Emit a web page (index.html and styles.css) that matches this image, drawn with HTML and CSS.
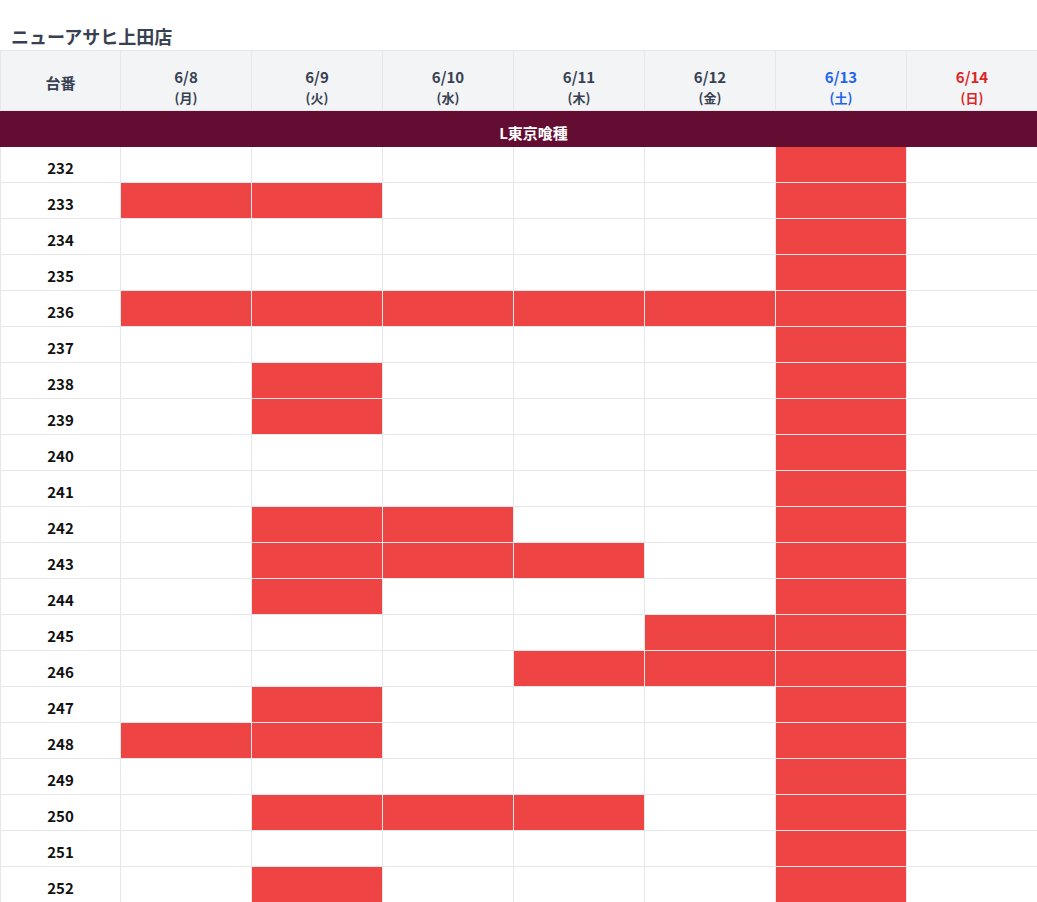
FILE: index.html
```html
<!DOCTYPE html>
<html lang="ja">
<head>
<meta charset="utf-8">
<title>ニューアサヒ上田店</title>
<link rel="stylesheet" href="styles.css">
</head>
<body>
<h1 class="title">ニューアサヒ上田店</h1>
<table class="grid">
  <colgroup>
    <col class="c-no">
    <col class="c-day"><col class="c-day"><col class="c-day"><col class="c-day"><col class="c-day"><col class="c-day"><col class="c-day">
  </colgroup>
  <thead>
    <tr class="head">
      <th class="h-no">台番</th>
      <th class="h-day"><span class="d">6/8</span><span class="w">(月)</span></th>
      <th class="h-day"><span class="d">6/9</span><span class="w">(火)</span></th>
      <th class="h-day"><span class="d">6/10</span><span class="w">(水)</span></th>
      <th class="h-day"><span class="d">6/11</span><span class="w">(木)</span></th>
      <th class="h-day"><span class="d">6/12</span><span class="w">(金)</span></th>
      <th class="h-day sat"><span class="d">6/13</span><span class="w">(土)</span></th>
      <th class="h-day sun"><span class="d">6/14</span><span class="w">(日)</span></th>
    </tr>
  </thead>
  <tbody id="body">
    <tr class="band"><td colspan="8"><span class="band-text">L東京喰種</span></td></tr>
  </tbody>
</table>
<script>
  var data = [
    [232,[5]],[233,[0,1,5]],[234,[5]],[235,[5]],[236,[0,1,2,3,4,5]],
    [237,[5]],[238,[1,5]],[239,[1,5]],[240,[5]],[241,[5]],
    [242,[1,2,5]],[243,[1,2,3,5]],[244,[1,5]],[245,[4,5]],[246,[3,4,5]],
    [247,[1,5]],[248,[0,1,5]],[249,[5]],[250,[1,2,3,5]],[251,[5]],[252,[1,5]]
  ];
  var body = document.getElementById('body');
  data.forEach(function (r) {
    var tr = document.createElement('tr');
    tr.className = 'row';
    var th = document.createElement('td');
    th.className = 'no';
    th.textContent = r[0];
    tr.appendChild(th);
    for (var i = 0; i < 7; i++) {
      var td = document.createElement('td');
      td.className = 'cell' + (r[1].indexOf(i) >= 0 ? ' on' : '');
      tr.appendChild(td);
    }
    body.appendChild(tr);
  });
</script>
</body>
</html>
```
FILE: styles.css
```css
html, body {
  margin: 0;
  padding: 0;
  background: #ffffff;
}
body {
  font-family: "Noto Sans CJK JP", "Noto Sans", sans-serif;
  padding-top: 22px;
}
.title {
  margin: 0;
  padding-left: 11px;
  font-size: 18px;
  line-height: 28px;
  font-weight: 700;
  color: #374151;
}
.grid {
  width: 1037px;
  table-layout: fixed;
  border-collapse: collapse;
}
.c-no { width: 120px; }
.c-day { width: 131px; }
.grid th, .grid td {
  border: 1px solid #e5e7eb;
  padding: 0;
  text-align: center;
}
.head { height: 60px; }
.head th {
  background: #f3f4f6;
  color: #374151;
  font-weight: 700;
  vertical-align: top;
}
.h-no {
  font-size: 15px;
  line-height: 22px;
  padding-top: 21px !important;
}
.h-day { padding-top: 15px !important; }
.h-day .d {
  display: block;
  font-size: 15px;
  line-height: 21px;
}
.h-day .w {
  display: block;
  font-size: 13px;
  line-height: 21px;
}
.h-day.sat { color: #2563eb; }
.h-day.sun { color: #dc2626; }
.band { height: 36px; }
.band td {
  background: #640d33;
  border-color: #640d33;
  color: #ffffff;
  font-size: 15px;
  font-weight: 700;
  line-height: 20px;
  vertical-align: top;
  padding-top: 12px;
  padding-left: 29px;
}
.row { height: 36px; }
.no {
  font-size: 15px;
  font-weight: 700;
  color: #111111;
  line-height: 24px;
  vertical-align: top;
  padding-top: 9px !important;
}
.cell.on { background: #ef4444; }
```
